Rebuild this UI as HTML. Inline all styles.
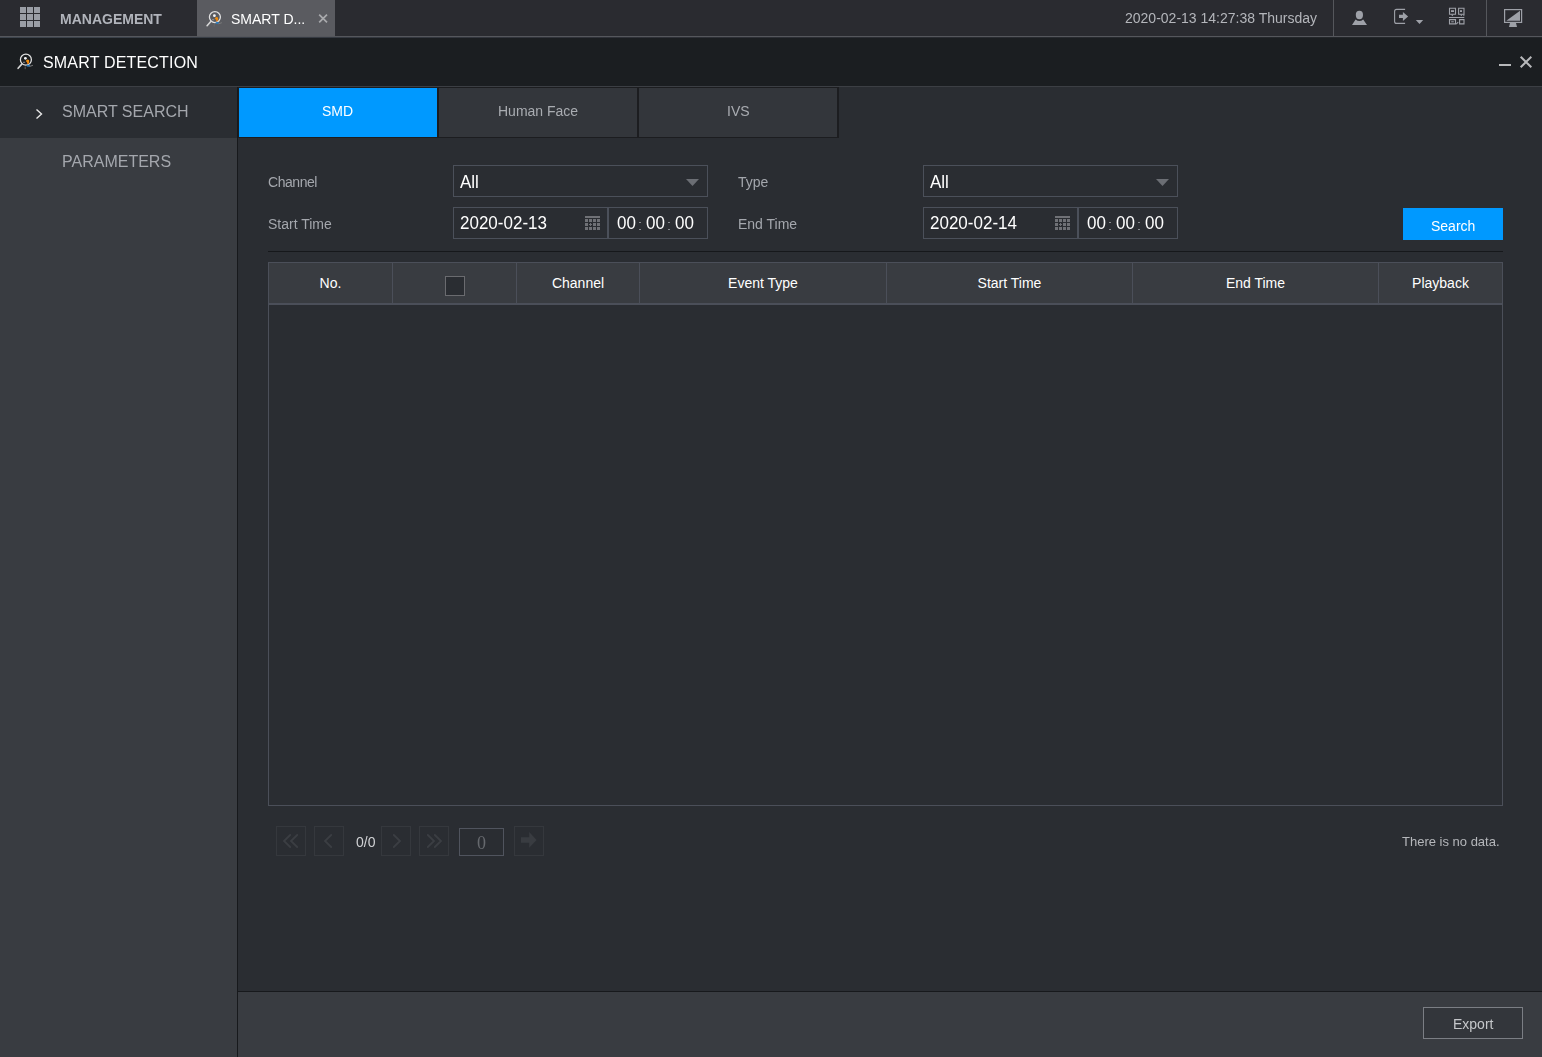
<!DOCTYPE html>
<html><head><meta charset="utf-8">
<style>
*{margin:0;padding:0;box-sizing:border-box}
html,body{width:1542px;height:1057px;overflow:hidden;-webkit-font-smoothing:antialiased;background:#2a2d32;font-family:"Liberation Sans",sans-serif}
.a{position:absolute}
.t{position:absolute;white-space:nowrap;line-height:1;will-change:transform}
#top{left:0;top:0;width:1542px;height:36px;background:#2a2b30}
#topline1{left:0;top:36px;width:1542px;height:1px;background:#55575c}
#topline2{left:0;top:37px;width:1542px;height:1px;background:linear-gradient(to right,#3d444d,#2f3138 40%,#24272b 85%)}
#hdr{left:0;top:38px;width:1542px;height:48px;background:#1b1e21}
#hdrline{left:0;top:86px;width:1542px;height:1px;background:#3c3f44}
#side{left:0;top:87px;width:237px;height:970px;background:#393c41}
#sidesel{left:0;top:87px;width:237px;height:51px;background:#2a2d32}
#sideb{left:237px;top:87px;width:1px;height:970px;background:#17191c}
#foot{left:238px;top:992px;width:1304px;height:65px;background:#393c41}
#footb{left:238px;top:991px;width:1304px;height:1px;background:#17191c}
.tab{position:absolute;top:87px;height:51px;width:201px;background:#1c1d20}
.tabin{position:absolute;left:1px;top:1px;width:198px;height:49px;background:#33363b}
.lbl{color:#a4a7ad;font-size:14px}
.box{position:absolute;border:1px solid #4b505a;background:#2a2d32}
.val{color:#fff;font-size:17px;transform:scaleY(1.1);transform-origin:0 100%}
.dot{width:2px;height:1px;background:#8a8c90}
.vd{top:263px;width:1px;height:40px;background:#4b4f59}
.th{position:absolute;top:276px;text-align:center;font-size:14px;color:#fff;line-height:14px}
.pb{position:absolute;top:826px;width:30px;height:30px;border:1px solid #35383d}

</style></head><body>
<div class="a" id="top"></div>
<div class="a" id="topline1"></div>
<div class="a" id="topline2"></div>
<div class="a" id="hdr"></div>
<div class="a" id="hdrline"></div>
<div class="a" id="side"></div>
<div class="a" id="sidesel"></div>
<div class="a" id="sideb"></div>
<div class="a" id="footb"></div>
<div class="a" id="foot"></div>

<!-- top bar -->
<svg class="a" style="left:20px;top:7px" width="20" height="20" viewBox="0 0 20 20">
<g fill="#9a9ea6">
<rect x="0" y="0" width="6" height="6"/><rect x="7" y="0" width="6" height="6"/><rect x="14" y="0" width="6" height="6"/>
<rect x="0" y="7" width="6" height="6"/><rect x="7" y="7" width="6" height="6"/><rect x="14" y="7" width="6" height="6"/>
<rect x="0" y="14" width="6" height="6"/><rect x="7" y="14" width="6" height="6"/><rect x="14" y="14" width="6" height="6"/>
</g></svg>
<div class="t" style="left:60px;top:12px;font-size:14px;font-weight:bold;color:#b1b4bb">MANAGEMENT</div>
<div class="a" style="left:197px;top:0;width:138px;height:36px;background:#5a5b60"></div>
<div class="t" style="left:231px;top:12px;font-size:14px;color:#fff">SMART D...</div>
<div class="t" style="left:1125px;top:11px;font-size:14px;color:#b4b6bb">2020-02-13 14:27:38 Thursday</div>
<div class="a" style="left:1333px;top:0;width:1px;height:36px;background:#55575c"></div>
<div class="a" style="left:1486px;top:0;width:1px;height:36px;background:#55575c"></div>


<!-- icons -->
<svg class="a" style="left:0;top:0" width="1542" height="140" viewBox="0 0 1542 140">
<defs>
<g id="mag">
<circle cx="0" cy="0" r="5.5" fill="none" stroke="#e2e2e2" stroke-width="1.25"/>
<line x1="-3.9" y1="4.2" x2="-7.8" y2="8.6" stroke="#d6d6d6" stroke-width="1.6" stroke-linecap="round"/>
<circle cx="-0.5" cy="-1.4" r="1.4" fill="#f4f4f4"/>
<path d="M-2.9 2.6H-0.7" stroke="#9a9a9a" stroke-width="0.9"/>
<path d="M-0.2 1.2L1.4 -0.1L3.1 0.3L3.3 2.2L2.6 4.2L1.5 4.1L0.9 2.3Z" fill="#f08c0c"/><path d="M1.5 1.8L2.6 4.2L1.6 4.1Z" fill="#e0600a"/>
<ellipse cx="2.4" cy="6" rx="1.9" ry="1" fill="#2a78b8"/>
<path d="M3.5 6.8L7 5.6" stroke="#7a7a7a" stroke-width="1"/>
<path d="M-0.7 6.8V9.5" stroke="#6a6a6a" stroke-width="0.9"/>
</g>
</defs>
<use href="#mag" x="214.9" y="17.1"/>
<use href="#mag" x="25.9" y="59.7"/>
<path d="M319.2 14.6L327 22.4M327 14.6L319.2 22.4" stroke="#a9aaad" stroke-width="1.7"/>
<rect x="1499" y="64" width="12" height="2" fill="#b8b9bb"/>
<path d="M1520.7 56.7L1531.3 67.3M1531.3 56.7L1520.7 67.3" stroke="#b8b9bb" stroke-width="2"/>
<path d="M36.5 109.5L41.5 114L36.5 118.5" fill="none" stroke="#e8e8e8" stroke-width="1.4"/>
<g fill="#9ea1a8">
<ellipse cx="1359.4" cy="15.05" rx="3.6" ry="4.2"/>
<path d="M1352 25L1355.6 19.6Q1359.4 22.6 1363.2 19.6L1367 25Z"/>
<path d="M1405.1 9.4H1396.6Q1394.6 9.4 1394.6 11.4V21.4Q1394.6 23.4 1396.6 23.4H1405.1" fill="none" stroke="#9ea1a8" stroke-width="1.1"/>
<path d="M1399 14.8H1402.9V12L1408.1 16.5L1402.9 21.1V18.1H1399Z"/>
<path d="M1415.8 20H1423.2L1419.5 24.1Z"/>
<path d="M1449.5 8.3h6v6h-6z M1458.6 8.3h5.4v6h-5.4z" fill="none" stroke="#9ea1a8" stroke-width="1.1"/>
<rect x="1451" y="10.2" width="3" height="1.8"/><rect x="1460" y="10.2" width="2" height="1.8"/>
<path d="M1451 14.6h2.6l-1.3 1.6z M1460 14.6h2.6l-1.3 1.6z"/>
<rect x="1463.4" y="14.2" width="0.9" height="2"/>
<rect x="1449" y="17" width="15.3" height="1"/>
<path d="M1449.5 19.6h6v4.3h-6z M1459.6 19.6h4.4v4.3h-4.4z" fill="none" stroke="#9ea1a8" stroke-width="1.1"/>
<rect x="1451.2" y="21.3" width="2.6" height="1"/>
<path d="M1456.2 24.1L1458.2 22.1" stroke="#9ea1a8" stroke-width="1.1"/>
<rect x="1504.6" y="9.6" width="17" height="12.8" fill="none" stroke="#9ea1a8" stroke-width="1.2"/>
<path d="M1506.3 20.7L1520 10.8V20.7Z"/>
<path d="M1510 22.9H1516L1517 27H1509Z"/>
</g>
</svg>
<!-- header -->
<div class="t" style="left:43px;top:55px;font-size:16px;color:#fff;letter-spacing:0.18px">SMART DETECTION</div>

<!-- sidebar -->
<div class="t" style="left:62px;top:104px;font-size:16px;color:#a4a7ad">SMART SEARCH</div>
<div class="t" style="left:62px;top:154px;font-size:16px;color:#a4a7ad">PARAMETERS</div>

<!-- tabs -->
<div class="a" style="left:238px;top:87px;width:200px;height:51px;background:#1c1d20"></div>
<div class="a" style="left:239px;top:88px;width:198px;height:49px;background:#0099ff"></div>
<div class="t" style="left:322px;top:104px;font-size:14px;color:#fff">SMD</div>
<div class="tab" style="left:438px"><div class="tabin"></div></div>
<div class="tab" style="left:638px"><div class="tabin"></div></div>
<div class="t" style="left:498px;top:104px;font-size:14px;color:#a9acb1">Human Face</div>
<div class="t" style="left:727px;top:104px;font-size:14px;color:#a9acb1">IVS</div>

<svg width="0" height="0" style="position:absolute"><defs><g id="calg" fill="#6f7176">
<rect x="0" y="0" width="15" height="2"/>
<rect x="0" y="3" width="3" height="3"/><rect x="4" y="3" width="3" height="3"/><rect x="8" y="3" width="3" height="3"/><rect x="12" y="3" width="3" height="3"/>
<rect x="0" y="7" width="3" height="3"/><path d="M4 8.5H7M5.5 7V10" stroke="#6f7176" stroke-width="1"/><rect x="8" y="7" width="3" height="3"/><rect x="12" y="7" width="3" height="3"/>
<rect x="0" y="11" width="3" height="3"/><rect x="4" y="11" width="3" height="3"/><rect x="8" y="11" width="3" height="3"/><rect x="12" y="11" width="3" height="3"/>
</g></defs></svg>

<!-- form -->
<div class="t lbl" style="left:268px;top:175px;letter-spacing:-0.45px">Channel</div>
<div class="t lbl" style="left:268px;top:217px">Start Time</div>
<div class="t lbl" style="left:738px;top:175px">Type</div>
<div class="t lbl" style="left:738px;top:217px">End Time</div>

<div class="box" style="left:453px;top:165px;width:255px;height:32px"></div>
<div class="t val" style="left:460px;top:174px">All</div>
<svg class="a" style="left:686px;top:179px" width="13" height="7" viewBox="0 0 13 7"><path d="M0 0H13L6.5 7Z" fill="#6b6e74"/></svg>
<div class="box" style="left:453px;top:207px;width:155px;height:32px"></div>
<div class="box" style="left:608px;top:207px;width:100px;height:32px"></div>
<div class="t val" style="left:460px;top:215px">2020-02-13</div>
<svg class="a cal" style="left:585px;top:216px" width="15" height="15" viewBox="0 0 15 15"><use href="#calg"/></svg>
<div class="t val" style="left:617px;top:215px">00</div><div class="a dot" style="left:639px;top:221.5px"></div><div class="a dot" style="left:639px;top:228.5px"></div>
<div class="t val" style="left:646px;top:215px">00</div><div class="a dot" style="left:668px;top:221.5px"></div><div class="a dot" style="left:668px;top:228.5px"></div>
<div class="t val" style="left:675px;top:215px">00</div>

<div class="box" style="left:923px;top:165px;width:255px;height:32px"></div>
<div class="t val" style="left:930px;top:174px">All</div>
<svg class="a" style="left:1156px;top:179px" width="13" height="7" viewBox="0 0 13 7"><path d="M0 0H13L6.5 7Z" fill="#6b6e74"/></svg>
<div class="box" style="left:923px;top:207px;width:155px;height:32px"></div>
<div class="box" style="left:1078px;top:207px;width:100px;height:32px"></div>
<div class="t val" style="left:930px;top:215px">2020-02-14</div>
<svg class="a cal" style="left:1055px;top:216px" width="15" height="15" viewBox="0 0 15 15"><use href="#calg"/></svg>
<div class="t val" style="left:1087px;top:215px">00</div><div class="a dot" style="left:1109px;top:221.5px"></div><div class="a dot" style="left:1109px;top:228.5px"></div>
<div class="t val" style="left:1116px;top:215px">00</div><div class="a dot" style="left:1138px;top:221.5px"></div><div class="a dot" style="left:1138px;top:228.5px"></div>
<div class="t val" style="left:1145px;top:215px">00</div>

<div class="a" style="left:1403px;top:208px;width:100px;height:32px;background:#0099ff"></div>
<div class="t" style="left:1431px;top:219px;font-size:14px;color:#fff">Search</div>
<div class="a" style="left:268px;top:251px;width:1235px;height:1px;background:#16181b"></div>

<!-- table -->
<div class="a" style="left:268px;top:262px;width:1235px;height:544px;border:1px solid #4b4f59"></div>
<div class="a" style="left:269px;top:263px;width:1233px;height:40px;background:#393c41"></div>
<div class="a" style="left:269px;top:303px;width:1233px;height:2px;background:#4b4f59"></div>
<div class="a vd" style="left:392px"></div><div class="a vd" style="left:516px"></div><div class="a vd" style="left:639px"></div>
<div class="a vd" style="left:886px"></div><div class="a vd" style="left:1132px"></div><div class="a vd" style="left:1378px"></div>
<div class="th" style="left:269px;width:123px">No.</div>
<div class="th" style="left:517px;width:122px">Channel</div>
<div class="th" style="left:640px;width:246px">Event Type</div>
<div class="th" style="left:887px;width:245px">Start Time</div>
<div class="th" style="left:1133px;width:245px">End Time</div>
<div class="th" style="left:1379px;width:123px">Playback</div>
<div class="a" style="left:445px;top:276px;width:20px;height:20px;border:1px solid #6a6b6f;background:#2a2d32"></div>

<!-- pagination -->
<div class="pb" style="left:276px"></div><div class="pb" style="left:314px"></div>
<div class="pb" style="left:381px"></div><div class="pb" style="left:419px"></div>
<div class="pb" style="left:514px"></div>
<div class="t" style="left:356px;top:835px;font-size:14px;color:#d0d1d4">0/0</div>
<div class="a" style="left:459px;top:828px;width:45px;height:28px;border:1px solid #50545e"></div>
<div class="t" style="left:477px;top:834px;font-size:18px;font-family:'Liberation Serif',serif;color:#66696e">0</div>
<div class="t" style="left:1402px;top:835px;font-size:13px;color:#b5b7bb">There is no data.</div>

<svg class="a" style="left:0;top:820px" width="560" height="45" viewBox="0 820 560 45">
<g fill="none" stroke="#3b3e43" stroke-width="1.8" stroke-linecap="round">
<path d="M290.2 835L284 841L290.2 847M297.2 835L291 841L297.2 847"/>
<path d="M331.2 835L325 841L331.2 847"/>
<path d="M393.8 835L400 841L393.8 847"/>
<path d="M427.8 835L434 841L427.8 847M434.8 835L441 841L434.8 847"/>
</g>
<path d="M521 837.3H529.2V832L536.6 840L529.2 847.7V842.8H521Z" fill="#393c41"/>
</svg>
<!-- footer -->
<div class="a" style="left:1423px;top:1007px;width:100px;height:32px;border:1px solid #7b7e84;background:#33363b"></div>
<div class="t" style="left:1453px;top:1017px;font-size:14px;color:#c5c7ca">Export</div>
</body></html>
